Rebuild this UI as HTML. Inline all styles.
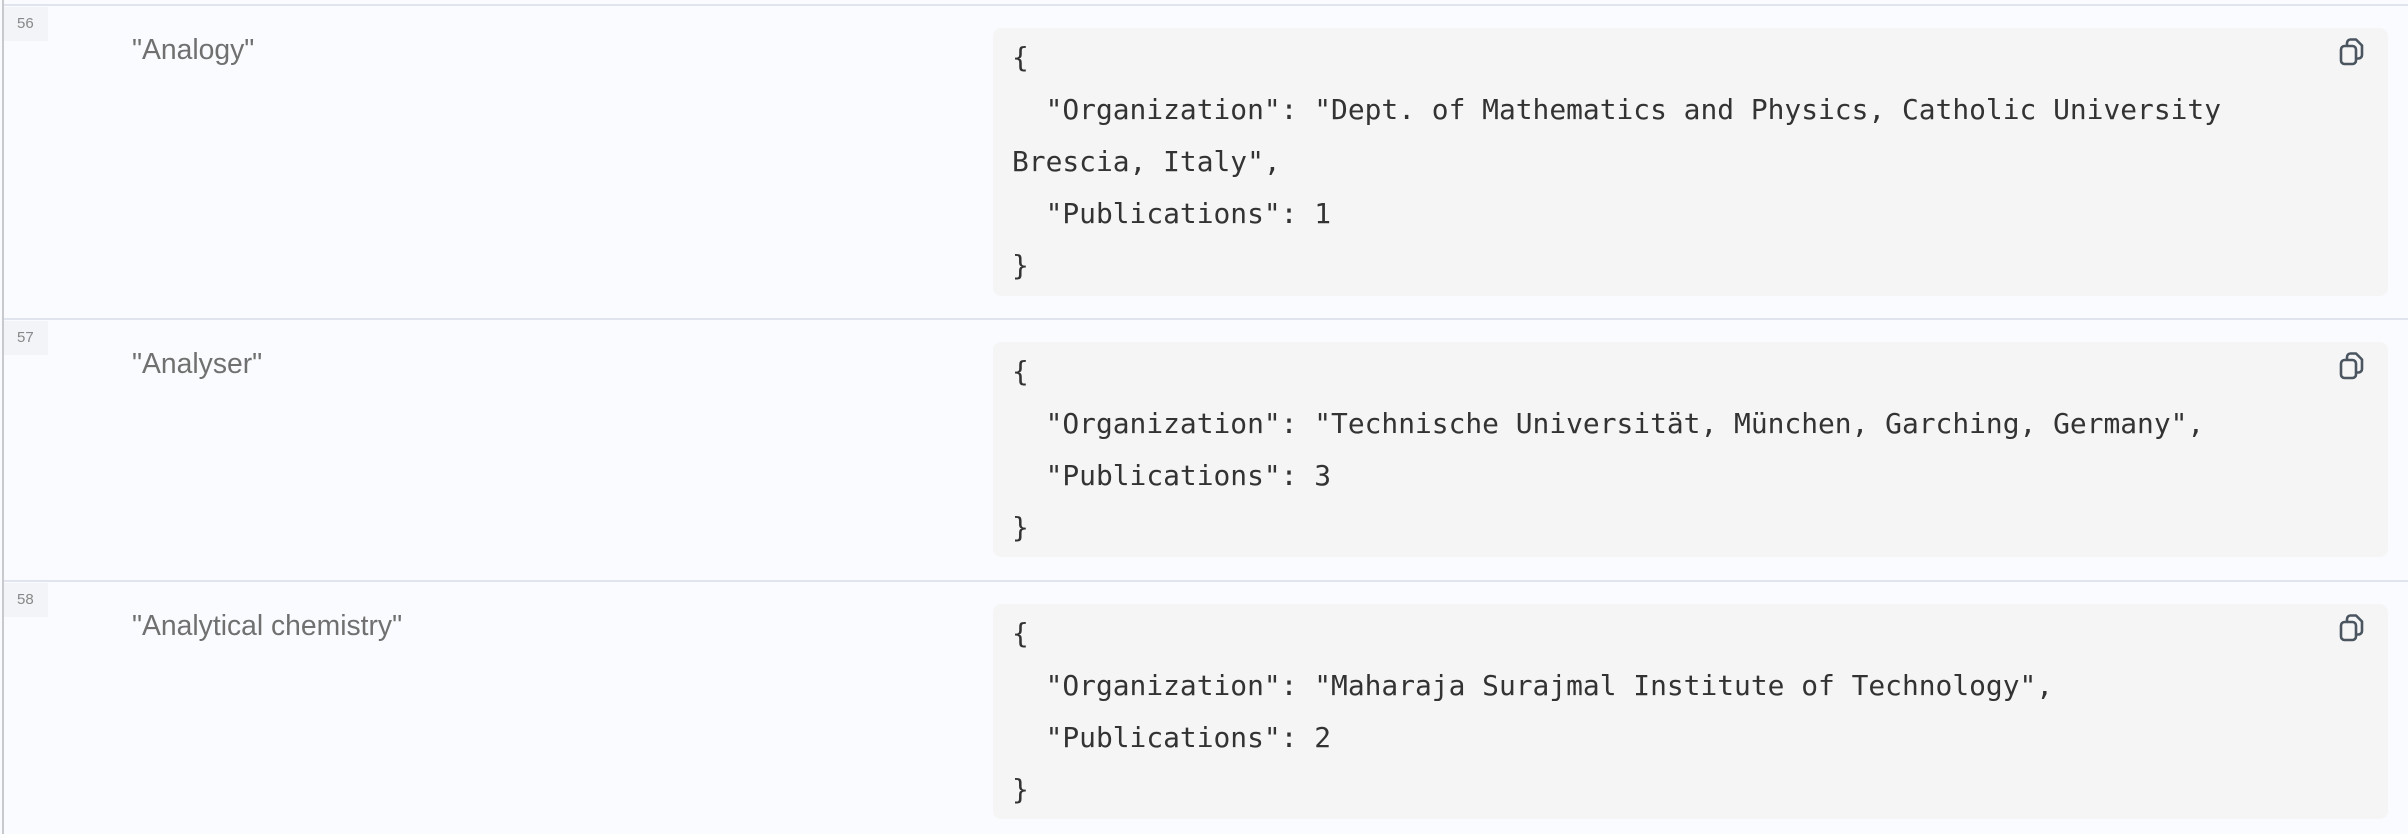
<!DOCTYPE html>
<html><head><meta charset="utf-8"><style>
*{margin:0;padding:0;box-sizing:border-box}
body{width:2408px;height:834px;overflow:hidden;background:#fafbfe;position:relative;font-family:"Liberation Sans",sans-serif}
.vl{position:absolute;left:2px;top:0;width:2px;height:834px;background:#c8c9cc}
.hl{position:absolute;left:4px;right:0;height:2px;background:#dfe4ee}
.num{position:absolute;left:4px;width:44px;height:34px;background:#f3f4f7;color:#888;font-size:15px;padding:8px 0 0 13px}
.lab{position:absolute;left:132px;font-size:28.3px;color:#707070}
.box{position:absolute;left:993px;width:1395px;background:#f5f5f5;border-radius:8px;padding:4px 0 4px 19px;font-family:"DejaVu Sans Mono","Liberation Mono",monospace;font-size:27.9px;line-height:52px;color:#333;white-space:pre}
.ic{position:absolute;left:2339px;width:26px;height:28px}
</style></head><body>
<div class="vl"></div>
<div class="hl" style="top:4px"></div>
<div class="hl" style="top:318px"></div>
<div class="hl" style="top:580px"></div>

<div class="num" style="top:7px">56</div>
<div class="lab" style="top:33px">"Analogy"</div>
<div class="box" style="top:28px;height:268px">{
  "Organization": "Dept. of Mathematics and Physics, Catholic University
Brescia, Italy",
  "Publications": 1
}</div>
<svg class="ic" style="top:38px" viewBox="0 0 26 28" fill="none" stroke="#4a5560" stroke-width="2.6" stroke-linejoin="round"><path d="M8 8 V5 a3.5 3.5 0 0 1 3.5-3.5 h5.5 l6 6 v9.5 a3.5 3.5 0 0 1-3.5 3.5 h-2.5"/><path d="M2 11.5 a3.5 3.5 0 0 1 3.5-3.5 h8 a3.5 3.5 0 0 1 3.5 3.5 v11 a3.5 3.5 0 0 1-3.5 3.5 h-8 a3.5 3.5 0 0 1-3.5-3.5z"/></svg>

<div class="num" style="top:321px">57</div>
<div class="lab" style="top:347px">"Analyser"</div>
<div class="box" style="top:342px;height:215px">{
  "Organization": "Technische Universität, München, Garching, Germany",
  "Publications": 3
}</div>
<svg class="ic" style="top:352px" viewBox="0 0 26 28" fill="none" stroke="#4a5560" stroke-width="2.6" stroke-linejoin="round"><path d="M8 8 V5 a3.5 3.5 0 0 1 3.5-3.5 h5.5 l6 6 v9.5 a3.5 3.5 0 0 1-3.5 3.5 h-2.5"/><path d="M2 11.5 a3.5 3.5 0 0 1 3.5-3.5 h8 a3.5 3.5 0 0 1 3.5 3.5 v11 a3.5 3.5 0 0 1-3.5 3.5 h-8 a3.5 3.5 0 0 1-3.5-3.5z"/></svg>

<div class="num" style="top:583px">58</div>
<div class="lab" style="top:609px">"Analytical chemistry"</div>
<div class="box" style="top:604px;height:215px">{
  "Organization": "Maharaja Surajmal Institute of Technology",
  "Publications": 2
}</div>
<svg class="ic" style="top:614px" viewBox="0 0 26 28" fill="none" stroke="#4a5560" stroke-width="2.6" stroke-linejoin="round"><path d="M8 8 V5 a3.5 3.5 0 0 1 3.5-3.5 h5.5 l6 6 v9.5 a3.5 3.5 0 0 1-3.5 3.5 h-2.5"/><path d="M2 11.5 a3.5 3.5 0 0 1 3.5-3.5 h8 a3.5 3.5 0 0 1 3.5 3.5 v11 a3.5 3.5 0 0 1-3.5 3.5 h-8 a3.5 3.5 0 0 1-3.5-3.5z"/></svg>
</body></html>
